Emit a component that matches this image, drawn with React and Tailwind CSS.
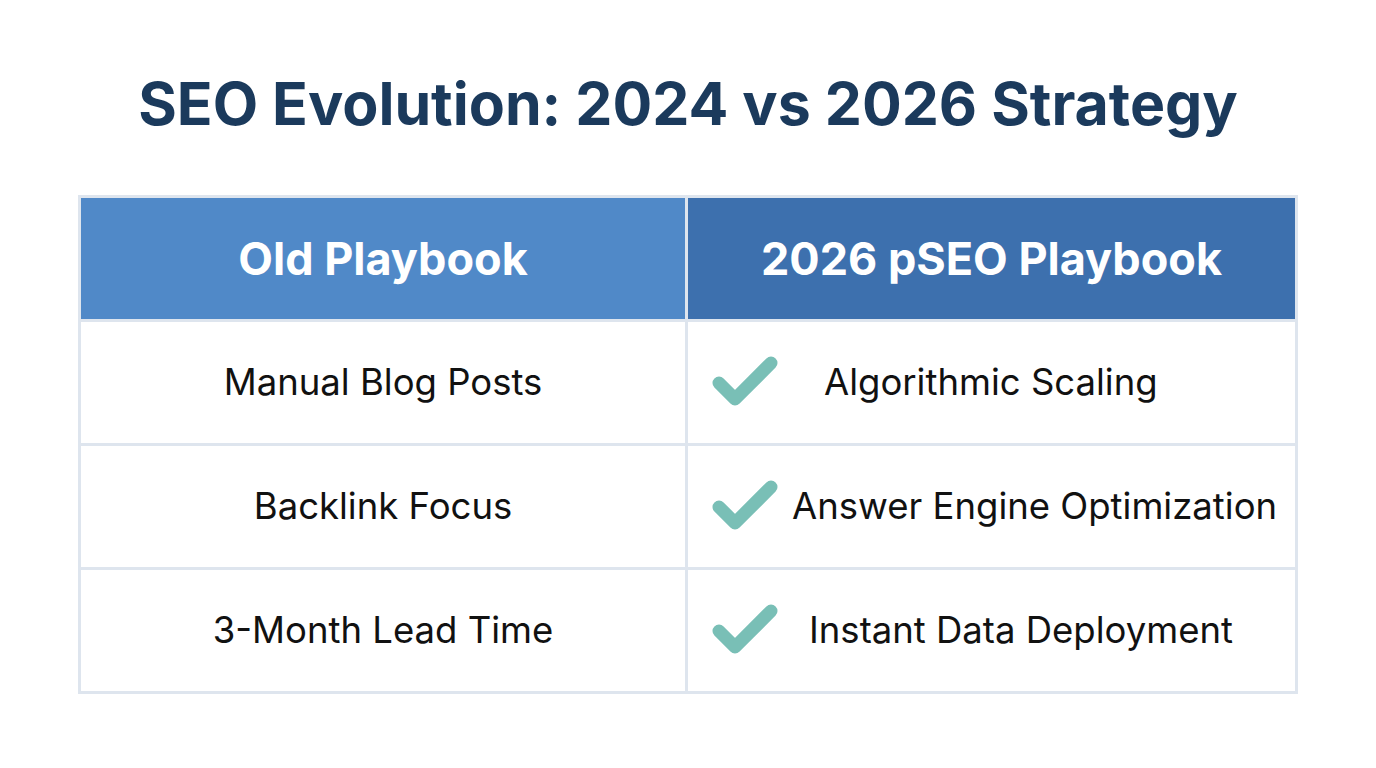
import React from 'react';

const rows = [
  { old: 'Manual Blog Posts', next: 'Algorithmic Scaling', gap: 'ml-[46px]' },
  { old: 'Backlink Focus', next: 'Answer Engine Optimization', gap: 'ml-[14px]' },
  { old: '3-Month Lead Time', next: 'Instant Data Deployment', gap: 'ml-[31px]' },
];

const Check = () => (
  <svg width="66" height="54" viewBox="0 0 66 54" className="shrink-0">
    <path
      d="M7 27 L23 43 L59 7"
      fill="none"
      stroke="#79bfb6"
      strokeWidth="13"
      strokeLinecap="round"
      strokeLinejoin="round"
    />
  </svg>
);

const App = () => {
  return (
    <div className="w-[1376px] h-[768px] bg-white font-['Inter',sans-serif]">
      {/* Title */}
      <div className="pt-[68px] h-[195px]">
        <h1 className="text-center text-[59px] leading-[72px] font-bold text-[#1b3a5c]">
          SEO Evolution: 2024 vs 2026 Strategy
        </h1>
      </div>

      {/* Comparison table */}
      <div className="ml-[78px] w-[1220px] border-[3px] border-[#dee5ee] grid grid-cols-2">
        <div className="h-[121px] bg-[#5089c8] border-r-[3px] border-[#dee5ee] flex items-center justify-center">
          <span className="text-white text-[45px] font-bold">Old Playbook</span>
        </div>
        <div className="h-[121px] bg-[#3d70ae] flex items-center justify-center">
          <span className="text-white text-[45px] font-bold">2026 pSEO Playbook</span>
        </div>

        {rows.map((row, i) => (
          <React.Fragment key={i}>
            <div className="h-[124px] border-t-[3px] border-r-[3px] border-[#dee5ee] flex items-center justify-center">
              <span className="text-[36.5px] text-[#111] pb-[1px]">{row.old}</span>
            </div>
            <div className="h-[124px] border-t-[3px] border-[#dee5ee] flex items-center pl-[24px]">
              <Check />
              <span className={`text-[36.5px] text-[#111] pb-[1px] whitespace-nowrap ${row.gap}`}>{row.next}</span>
            </div>
          </React.Fragment>
        ))}
      </div>
    </div>
  );
};

export default App;
